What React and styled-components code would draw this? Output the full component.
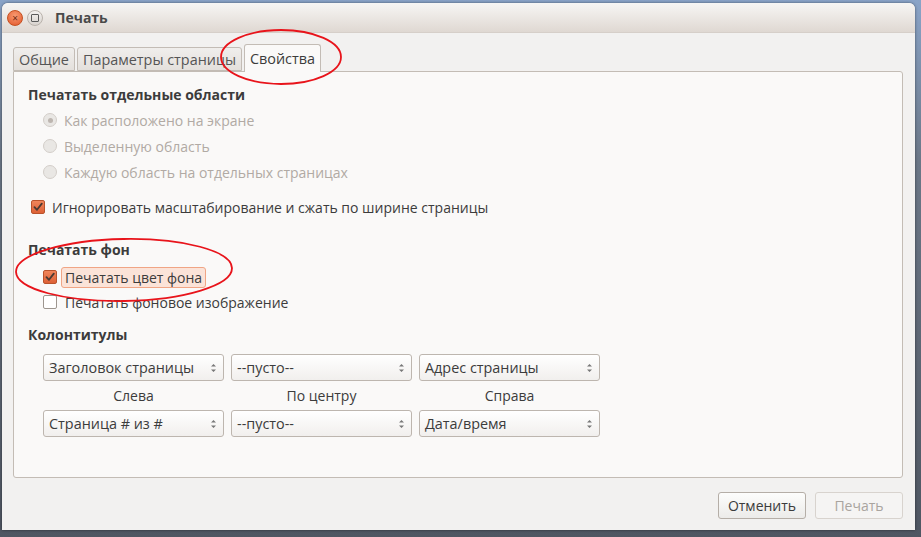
import React from 'react'
import styled, { createGlobalStyle } from 'styled-components'

const GlobalStyle = createGlobalStyle`
    html, body {
        margin: 0;
        padding: 0;
    }
    body {
        width: 921px;
        height: 537px;
        overflow: hidden;
        background: linear-gradient(#8aa4c8 0, #6b7787 30%, #4f5662 100%);
        font-family: "Open Sans", "DejaVu Sans", sans-serif;
        font-size: 14px;
        color: #3c3c3c;
    }
`

const Desktop = styled.div`
    width: 921px;
    height: 537px;
    padding: 3px 6px 7px 2px;
    box-sizing: border-box;
`

const Window = styled.div`
    position: relative;
    height: 100%;
    display: flex;
    flex-direction: column;
    background: #f2f1f0;
    border-radius: 6px 6px 0 0;
    box-shadow: 0 0 3px rgba(0, 0, 0, 0.5);
    overflow: hidden;
`

const TitleBar = styled.div`
    height: 29px;
    flex: none;
    display: flex;
    align-items: center;
    padding-left: 5px;
    gap: 4px;
    background: linear-gradient(#f7f6f4, #dfd8d2);
    border-bottom: 1px solid #d6cfc9;
`

const WinButton = styled.div`
    width: 16px;
    height: 16px;
    border-radius: 50%;
    display: flex;
    align-items: center;
    justify-content: center;
    box-sizing: border-box;
    font-size: 10px;
    line-height: 1;
    color: ${p => p.close ? '#6a2a14' : '#555'};
    background: ${p => p.close
        ? 'radial-gradient(circle at 50% 35%, #f89c73, #e2562a)'
        : 'linear-gradient(#f4f2f0, #d8d3ce)'};
    border: 1px solid ${p => p.close ? '#c5501f' : '#b9b2ab'};
`

const MaxGlyph = styled.div`
    width: 6px;
    height: 6px;
    border: 1px solid #5a5a5a;
    border-radius: 1px;
`

const Title = styled.div`
    margin-left: 8px;
    font-weight: bold;
    font-size: 14px;
    color: #4a4a4a;
`

const Body = styled.div`
    flex: 1;
    display: flex;
    flex-direction: column;
    padding: 11px 12px 11px 11px;
`

const TabRow = styled.div`
    display: flex;
    align-items: flex-end;
    gap: 2px;
    height: 27px;
    position: relative;
    z-index: 1;
`

const Tab = styled.div`
    height: ${p => p.active ? '28px' : '24px'};
    margin-bottom: ${p => p.active ? '-1px' : '0'};
    padding: 0 5px;
    display: flex;
    align-items: center;
    box-sizing: border-box;
    font-size: 14.4px;
    border: 1px solid #c3bcb5;
    border-bottom: ${p => p.active ? 'none' : '1px solid #c3bcb5'};
    border-radius: 3px 3px 0 0;
    background: ${p => p.active ? '#faf9f8' : 'linear-gradient(#f0eeec, #e4e0dc)'};
    color: ${p => p.active ? '#3c3c3c' : '#555'};
`

const Panel = styled.div`
    flex: 1;
    background: #faf9f8;
    border: 1px solid #c3bcb5;
    border-radius: 0 3px 3px 3px;
    padding: 13px 14px;
    display: flex;
    flex-direction: column;
`

const Heading = styled.div`
    font-weight: bold;
    color: #3c3c3c;
    height: 20px;
    line-height: 20px;
    margin-top: ${p => p.top || 0}px;
`

const Option = styled.div`
    display: flex;
    align-items: center;
    height: 22px;
    gap: 7px;
    padding-left: ${p => p.indent}px;
    margin-top: ${p => p.top || 0}px;
    color: ${p => p.disabled ? '#b1aaa4' : '#3c3c3c'};
`

const Radio = styled.div`
    width: 14px;
    height: 14px;
    border-radius: 50%;
    box-sizing: border-box;
    border: 1px solid #d3cec9;
    background: #e9e7e4;
    display: flex;
    align-items: center;
    justify-content: center;
    flex: none;

    &::after {
        content: '';
        width: 5px;
        height: 5px;
        border-radius: 50%;
        background: ${p => p.checked ? '#bdb6b0' : 'transparent'};
    }
`

const Box = styled.div`
    width: 14px;
    height: 14px;
    border-radius: 2px;
    box-sizing: border-box;
    flex: none;
    border: 1px solid ${p => p.checked ? '#b9532c' : '#9d968f'};
    background: ${p => p.checked ? 'linear-gradient(#f0855a, #dd6136)' : '#fff'};
    display: flex;
    align-items: center;
    justify-content: center;
`

const Label = styled.span`
    padding: 0 ${p => p.focused ? '3px' : '0'};
    margin-left: ${p => p.focused ? '-3px' : '0'};
    height: 21px;
    line-height: 20px;
    box-sizing: border-box;
    border-radius: 3px;
    border: 1px solid ${p => p.focused ? '#f0a585' : 'transparent'};
    background: ${p => p.focused ? '#fbe3d8' : 'transparent'};
`

const HFGrid = styled.div`
    display: grid;
    grid-template-columns: repeat(3, 181px);
    column-gap: 7px;
    padding-left: 15px;
    margin-top: 9px;
`

const Combo = styled.div`
    height: 27px;
    box-sizing: border-box;
    border: 1px solid #bdb6af;
    border-radius: 3px;
    background: linear-gradient(#ffffff, #f1efed);
    display: flex;
    align-items: center;
    justify-content: space-between;
    padding: 0 6px 0 5px;
    font-size: 14.4px;
    color: #3c3c3c;
`

const ColLabel = styled.div`
    text-align: center;
    height: 29px;
    line-height: 30px;
    color: #3c3c3c;
`

const Footer = styled.div`
    display: flex;
    justify-content: flex-end;
    gap: 9px;
    margin-top: 14px;
`

const Button = styled.div`
    height: 27px;
    width: ${p => p.w}px;
    box-sizing: border-box;
    border: 1px solid ${p => p.disabled ? '#d8d3ce' : '#b5aea7'};
    border-radius: 3px;
    background: ${p => p.disabled ? '#f5f4f3' : 'linear-gradient(#fdfdfc, #ecebe9)'};
    color: ${p => p.disabled ? '#a9a49f' : '#3c3c3c'};
    display: flex;
    align-items: center;
    justify-content: center;
`

const Marks = styled.svg`
    position: absolute;
    left: 0;
    top: 0;
    pointer-events: none;
    z-index: 5;
`

const Check = () => (
    <svg width="10" height="10" viewBox="0 0 10 10">
        <path d="M1.5 5.2 L4 7.8 L8.8 1.6" fill="none" stroke="#4a3a33" strokeWidth="1.8" strokeLinecap="round" strokeLinejoin="round" />
    </svg>
)

const Arrows = () => (
    <svg width="7" height="12" viewBox="0 0 7 12">
        <path d="M1 4.5 L3.5 2 L6 4.5 Z M1 7.5 L3.5 10 L6 7.5 Z" fill="#777" />
    </svg>
)

const ComboBox = ({ value }) => (
    <Combo>
        <span>{value}</span>
        <Arrows />
    </Combo>
)

const App = () => (
    <Desktop>
        <GlobalStyle />
        <Window>
            <TitleBar>
                <WinButton close>×</WinButton>
                <WinButton><MaxGlyph /></WinButton>
                <Title>Печать</Title>
            </TitleBar>

            <Body>
                <TabRow>
                    <Tab>Общие</Tab>
                    <Tab>Параметры страницы</Tab>
                    <Tab active>Свойства</Tab>
                </TabRow>

                <Panel>
                    <Heading>Печатать отдельные области</Heading>
                    <Option disabled indent={15} top={4}><Radio checked />Как расположено на экране</Option>
                    <Option disabled indent={15} top={4}><Radio />Выделенную область</Option>
                    <Option disabled indent={15} top={4}><Radio />Каждую область на отдельных страницах</Option>
                    <Option indent={3} top={13}><Box checked><Check /></Box>Игнорировать масштабирование и сжать по ширине страницы</Option>

                    <Heading top={22}>Печатать фон</Heading>
                    <Option indent={15} top={6}><Box checked><Check /></Box><Label focused>Печатать цвет фона</Label></Option>
                    <Option indent={15} top={3}><Box /><Label>Печатать фоновое изображение</Label></Option>

                    <Heading top={12}>Колонтитулы</Heading>
                    <HFGrid>
                        <ComboBox value="Заголовок страницы" />
                        <ComboBox value="--пусто--" />
                        <ComboBox value="Адрес страницы" />
                        <ColLabel>Слева</ColLabel>
                        <ColLabel>По центру</ColLabel>
                        <ColLabel>Справа</ColLabel>
                        <ComboBox value="Страница # из #" />
                        <ComboBox value="--пусто--" />
                        <ComboBox value="Дата/время" />
                    </HFGrid>
                </Panel>

                <Footer>
                    <Button w={88}>Отменить</Button>
                    <Button w={88} disabled>Печать</Button>
                </Footer>
            </Body>

            <Marks width="913" height="527">
                <ellipse cx="279" cy="54" rx="60" ry="27" fill="none" stroke="#e8141b" strokeWidth="1.8" />
                <ellipse cx="122" cy="267" rx="108" ry="31" fill="none" stroke="#e8141b" strokeWidth="1.8" transform="rotate(-1 122 267)" />
            </Marks>
        </Window>
    </Desktop>
)

export default App
